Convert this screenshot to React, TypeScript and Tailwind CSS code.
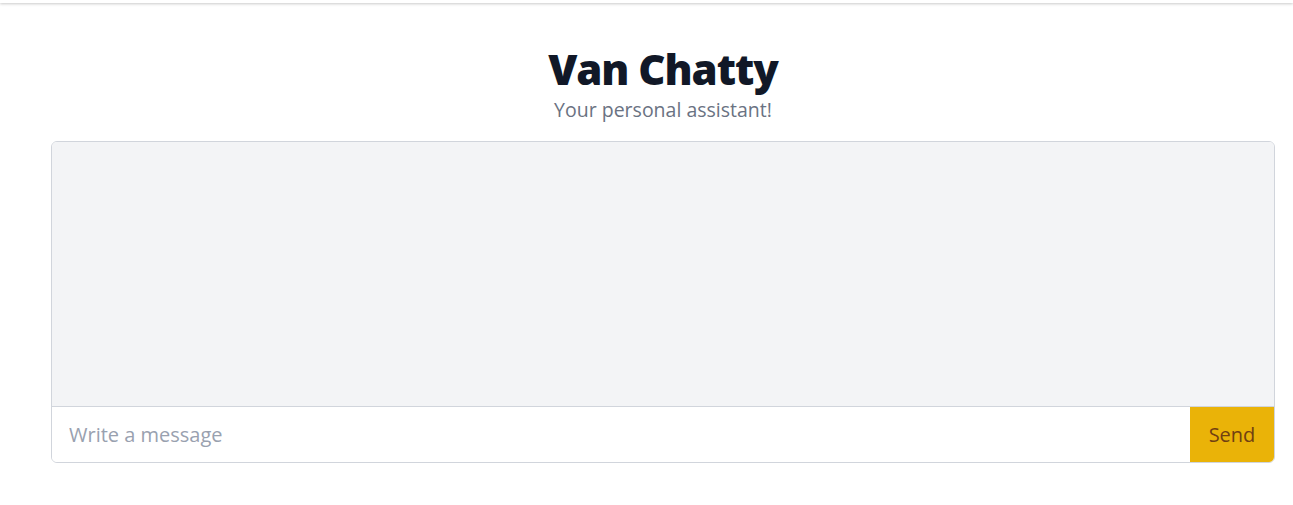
export default function App() {
  return (
    <div className="min-h-screen bg-white" style={{ fontFamily: '"Open Sans", "Noto Sans", sans-serif' }}>
      {/* top bar */}
      <div className="h-[3px] bg-white shadow-[0_1px_3px_rgba(0,0,0,0.22)]" />

      <div className="pl-[51px] pr-[18px]">
        <header className="pt-[42px] text-center">
          <h1 className="text-[42px] leading-[48px] font-extrabold text-[#111827] tracking-tight">Van Chatty</h1>
          <p className="mt-[4px] text-[19.5px] leading-[26px] text-gray-500">Your personal assistant!</p>
        </header>

        <div className="mt-[18px] flex flex-col rounded-md border border-gray-300 overflow-hidden">
          <div className="h-[264px] bg-gray-100" />
          <div className="flex border-t border-gray-300 bg-white h-[56px]">
            <input
              className="flex-1 px-[17px] text-[20px] text-gray-700 placeholder:text-gray-400 outline-none"
              placeholder="Write a message"
            />
            <button className="w-[84px] bg-[#eab308] text-[#713f12] text-xl font-medium">Send</button>
          </div>
        </div>
      </div>
    </div>
  );
}
